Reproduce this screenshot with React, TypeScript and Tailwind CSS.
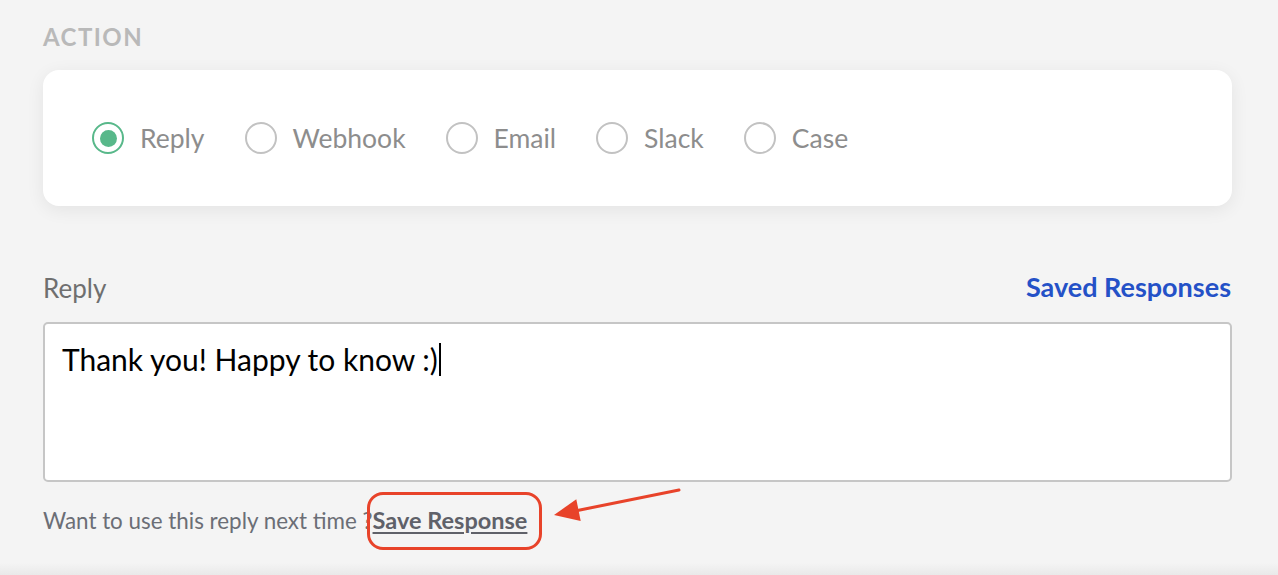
import { useState } from "react"

const options = ["Reply", "Webhook", "Email", "Slack", "Case"]

const Radio = ({ label, checked, onClick }: { label: string; checked: boolean; onClick: () => void }) => (
    <button onClick={onClick} className="flex items-center gap-[16px]">
        <span
            className={
                checked
                    ? "w-[32px] h-[32px] rounded-full border-[2px] border-[#58b88a] flex items-center justify-center"
                    : "w-[32px] h-[32px] rounded-full border-[2px] border-[#c2c2c2] flex items-center justify-center"
            }
        >
            {checked && <span className="w-[17px] h-[17px] rounded-full bg-[#58b88a]" />}
        </span>
        <span className="text-[26.5px] leading-none text-[#8d8d8d]">{label}</span>
    </button>
)

export default function App() {
    const [selected, setSelected] = useState("Reply")

    return (
        <div className="relative w-full h-[575px] overflow-hidden bg-[#f4f4f4] font-['Lato','Noto_Sans',sans-serif]">
            <div className="pl-[43px] pr-[46px] pt-[22px]">
                <h2 className="text-[24px] leading-[30px] font-bold tracking-[0.06em] text-[#b9b9b9]">ACTION</h2>

                <div className="mt-[18px] h-[136px] bg-white rounded-[16px] shadow-[0_4px_18px_rgba(0,0,0,0.07)] flex items-center gap-[40px] pl-[49px]">
                    {options.map((o) => (
                        <Radio key={o} label={o} checked={selected === o} onClick={() => setSelected(o)} />
                    ))}
                </div>

                <div className="mt-[65px] flex items-end justify-between">
                    <span className="text-[26px] leading-[30px] text-[#6f6f6f]">Reply</span>
                    <span className="text-[27px] leading-[32px] font-bold text-[#2451c7] pr-[1px]">Saved Responses</span>
                </div>

                <div className="mt-[19px] h-[160px] bg-white border-[2px] border-[#c6c6c6] rounded-[5px] px-[17px] pt-[17px]">
                    <p className="text-[30px] leading-[36px] text-black flex items-center">
                        Thank you! Happy to know :)
                        <span className="inline-block w-[2px] h-[33px] bg-black ml-[1px]" />
                    </p>
                </div>

                <div className="mt-[24px] flex items-center text-[22.4px] leading-[28px] text-[#6b6e76]">
                    <span>Want to use this reply next time ?</span>
                    <span className="relative">
                        <a className="text-[23.5px] font-bold underline underline-offset-[3px] text-[#5f6169] cursor-pointer">Save Response</a>
                        <span className="absolute left-[-6px] right-[-15px] top-[-14px] bottom-[-15px] rounded-[16px] border-[3px] border-[#e8432a]" />
                        <svg className="absolute left-[176px] top-[-20px]" width="135" height="38" viewBox="0 0 135 38">
                            <line x1="130" y1="4" x2="26" y2="25" stroke="#e8432a" strokeWidth="3" strokeLinecap="round" />
                            <polygon points="5,29 31.7,34.9 27.3,13.3" fill="#e8432a" />
                        </svg>
                    </span>
                </div>
            </div>
            <div className="absolute left-0 right-0 bottom-0 h-[12px] bg-gradient-to-b from-[#f4f4f4] to-[#e9e9e9]" />
        </div>
    )
}
